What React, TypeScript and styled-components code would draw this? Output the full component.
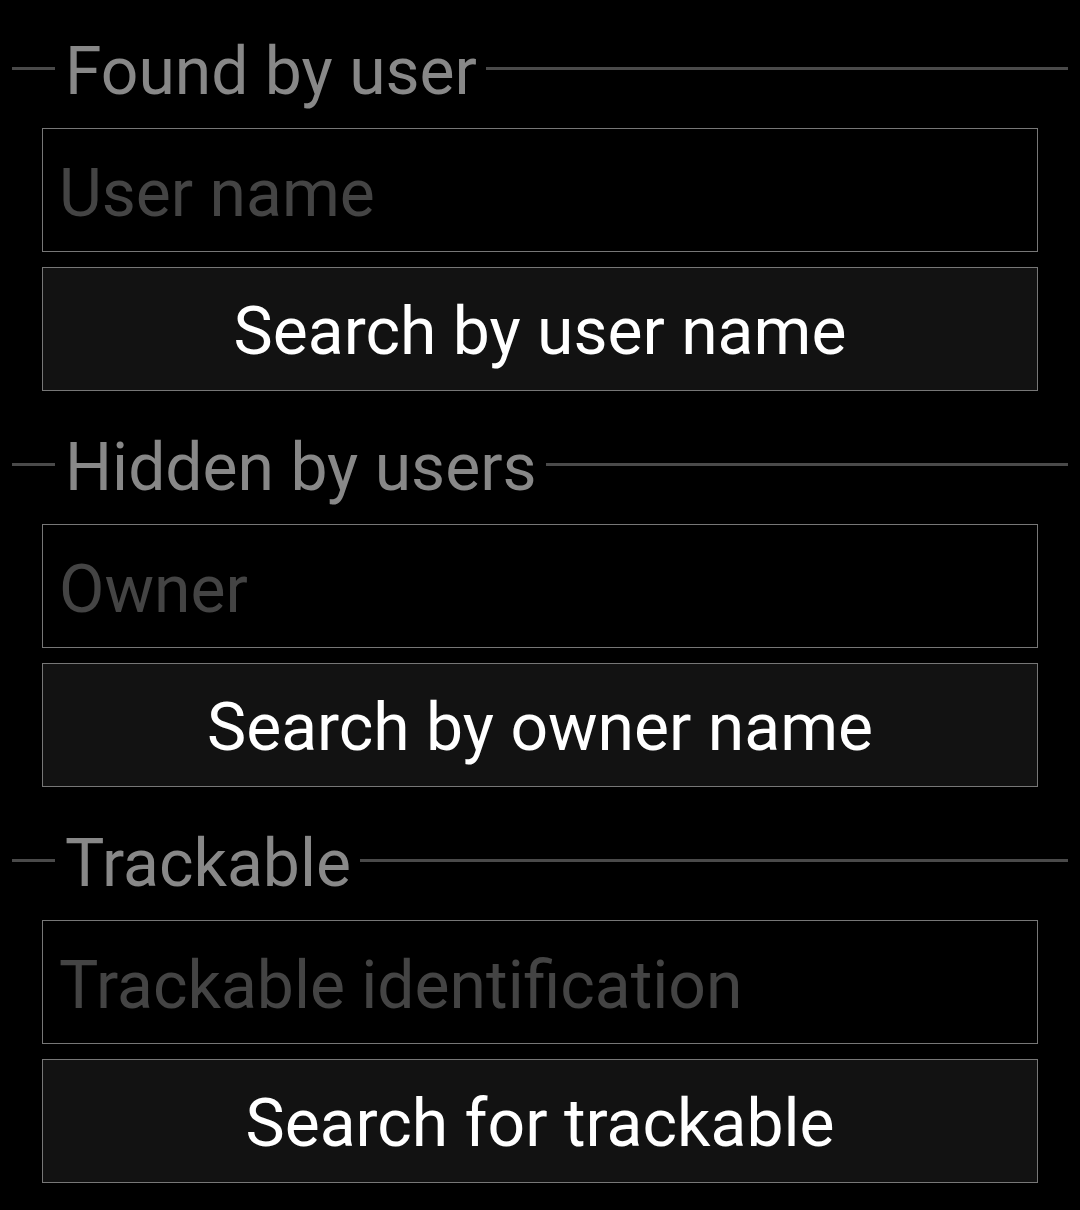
import React from "react";
import styled, { createGlobalStyle } from "styled-components";

const Global = createGlobalStyle`
  html, body {
    margin: 0;
    padding: 0;
    background: #000;
  }
  body {
    font-family: Roboto, "Noto Sans", sans-serif;
  }
`;

const Page = styled.div`
  width: 1080px;
  height: 1210px;
  background: #000;
  padding: 18px 12px 0 12px;
  box-sizing: border-box;
  display: flex;
  flex-direction: column;
  gap: 23px;
`;

const Section = styled.section`
  display: flex;
  flex-direction: column;
`;

const Header = styled.div`
  height: 100px;
  margin-bottom: 10px;
  display: flex;
  align-items: center;
`;

const Rule = styled.div<{ $grow?: boolean }>`
  height: 3px;
  background: #4a4a4a;
  flex: ${(p) => (p.$grow ? "1 1 auto" : "0 0 43px")};
`;

const Title = styled.span`
  font-size: 66px;
  line-height: 80px;
  color: #888888;
  padding: 8px 9px 0 10px;
  white-space: nowrap;
`;

const Body = styled.div`
  display: flex;
  flex-direction: column;
  gap: 15px;
  padding: 0 30px;
`;

const Field = styled.input`
  box-sizing: border-box;
  height: 124px;
  width: 100%;
  background: #000;
  border: 1px solid #777;
  border-radius: 0;
  padding: 6px 0 0 16px;
  font-family: Roboto, "Noto Sans", sans-serif;
  font-size: 66px;
  color: #ddd;
  outline: none;
  &::placeholder {
    color: #444;
  }
`;

const Button = styled.button`
  box-sizing: border-box;
  height: 124px;
  width: 100%;
  background: #121212;
  border: 1px solid #777;
  border-radius: 0;
  padding: 4px 0 0 0;
  font-family: Roboto, "Noto Sans", sans-serif;
  font-size: 66px;
  color: #fff;
  cursor: pointer;
`;

const sections = [
  { title: "Found by user", placeholder: "User name", action: "Search by user name" },
  { title: "Hidden by users", placeholder: "Owner", action: "Search by owner name" },
  { title: "Trackable", placeholder: "Trackable identification", action: "Search for trackable" },
];

export default function App() {
  return (
    <>
      <Global />
      <Page>
        {sections.map((s) => (
          <Section key={s.title}>
            <Header>
              <Rule />
              <Title>{s.title}</Title>
              <Rule $grow />
            </Header>
            <Body>
              <Field placeholder={s.placeholder} />
              <Button>{s.action}</Button>
            </Body>
          </Section>
        ))}
      </Page>
    </>
  );
}
